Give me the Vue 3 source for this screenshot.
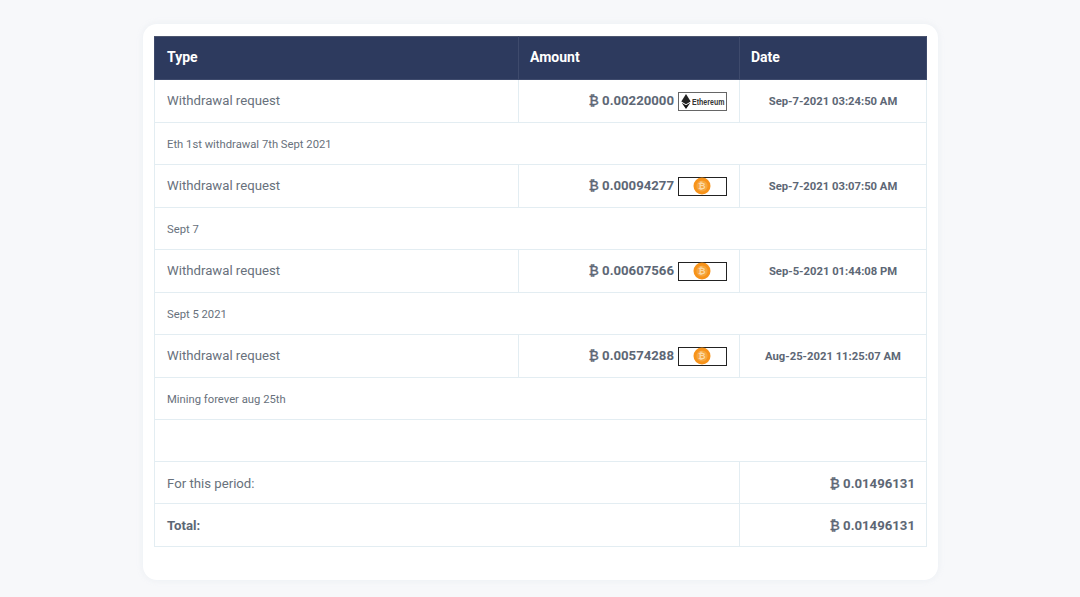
<script setup>
const rows = [
  { amount: '0.00220000', coin: 'eth', date: 'Sep-7-2021 03:24:50 AM', note: 'Eth 1st withdrawal 7th Sept 2021' },
  { amount: '0.00094277', coin: 'btc', date: 'Sep-7-2021 03:07:50 AM', note: 'Sept 7' },
  { amount: '0.00607566', coin: 'btc', date: 'Sep-5-2021 01:44:08 PM', note: 'Sept 5 2021' },
  { amount: '0.00574288', coin: 'btc', date: 'Aug-25-2021 11:25:07 AM', note: 'Mining forever aug 25th' },
]
</script>

<template>
  <div class="page">
    <div class="card">
      <table class="tbl">
        <colgroup>
          <col class="c1" />
          <col class="c2" />
          <col class="c3" />
        </colgroup>
        <thead>
          <tr class="head">
            <th>Type</th>
            <th class="tight">Amount</th>
            <th class="tight">Date</th>
          </tr>
        </thead>
        <tbody>
          <template v-for="r in rows" :key="r.date">
            <tr class="main">
              <td><span class="up">Withdrawal request</span></td>
              <td class="amount">
                <span class="amt up"><span class="sign">₿</span> {{ r.amount }}</span>
                <span class="badge" :class="r.coin">
                  <template v-if="r.coin === 'eth'">
                    <svg class="eth-i" width="10" height="15" viewBox="0 0 10 16">
                      <path d="M5 0 L10 8 L5 11 L0 8 Z" fill="#222" />
                      <path d="M5 12 L9.6 9.2 L5 16 L0.4 9.2 Z" fill="#111" />
                    </svg>
                    <span class="eth-t">Ethereum</span>
                  </template>
                  <svg v-else class="btc-i" width="18" height="18" viewBox="0 0 18 18">
                    <circle cx="9" cy="9" r="8.5" fill="#f7931a" />
                    <circle cx="9" cy="9" r="5.6" fill="#f5a63f" />
                    <text x="9" y="12.2" text-anchor="middle" class="btc-t">₿</text>
                  </svg>
                </span>
              </td>
              <td class="date">{{ r.date }}</td>
            </tr>
            <tr class="note">
              <td colspan="3"><span class="down">{{ r.note }}</span></td>
            </tr>
          </template>
          <tr class="note"><td colspan="3">&nbsp;</td></tr>
          <tr class="sum">
            <td colspan="2"><span class="down">For this period:</span></td>
            <td class="right strong"><span class="down"><span class="sign">₿</span> 0.01496131</span></td>
          </tr>
          <tr class="sum last">
            <td colspan="2" class="strong">Total:</td>
            <td class="right strong"><span class="sign">₿</span> 0.01496131</td>
          </tr>
        </tbody>
      </table>
    </div>
  </div>
</template>

<style>
html, body { margin: 0; background: #f7f8fa; }
</style>

<style scoped>
.page {
  height: 597px;
  box-sizing: border-box;
  padding-top: 24px;
  font-family: Roboto, "Liberation Sans", sans-serif;
  color: #68717c;
}
.card {
  width: 795px;
  height: 556px;
  margin-left: 143px;
  box-sizing: border-box;
  padding: 12px 11px 0;
  background: #fff;
  border-radius: 14px;
  box-shadow: 0 0 6px rgba(220, 226, 235, 0.45);
}
.tbl {
  width: 772px;
  table-layout: fixed;
  border-collapse: collapse;
  font-size: 13.2px;
}
.c1 { width: 364px; }
.c2 { width: 221px; }
.c3 { width: 187px; }
th, td {
  border: 1px solid #e3edf2;
  padding: 0 12px;
  box-sizing: border-box;
  text-align: left;
}
.up { position: relative; top: -1px; }
.down { position: relative; top: 1px; }
.head { height: 43px; }
.head th {
  background: #2d3a5e;
  color: #fff;
  font-size: 14px;
  font-weight: 700;
  border-color: #3e4a6c;
  border-top-color: #4d566f;
  padding-bottom: 2px;
}
.head th.tight { padding-left: 11px; }
.main { height: 43px; }
.note { height: 42px; }
.note td { font-size: 11.25px; color: #68717c; }
.sum { height: 42px; }
.sum.last { height: 43px; }
.amount { text-align: right; }
.amt {
  font-weight: 700;
  vertical-align: middle;
  color: #5d6775;
}
.sign {
  font-family: "DejaVu Sans", sans-serif;
  font-size: 13.5px;
  line-height: 1;
  font-weight: 400;
  -webkit-text-stroke: 0.5px #5d6775;
}
.badge {
  display: inline-flex;
  align-items: center;
  justify-content: center;
  box-sizing: border-box;
  width: 49px;
  height: 19px;
  margin-left: 4px;
  border: 1px solid #222;
  vertical-align: middle;
  background: #fff;
}
.badge.eth { border-color: #666; justify-content: flex-start; padding-left: 2px; }
.btc-i { position: relative; left: -1px; }
.eth-t {
  display: inline-block;
  width: 34px;
  font-family: "Liberation Sans", sans-serif;
  font-size: 9.5px;
  font-weight: 700;
  color: #333;
  transform: scaleX(0.74);
  transform-origin: left center;
  white-space: nowrap;
  margin-left: 1px;
}
.btc-t {
  font-family: "DejaVu Sans", sans-serif;
  font-size: 9px;
  font-weight: 700;
  fill: #fbd9a6;
}
.date {
  text-align: center;
  font-size: 11.25px;
  font-weight: 700;
  color: #5d6775;
  white-space: nowrap;
}
.strong { font-weight: 700; color: #5d6775; }
.right { text-align: right; padding-right: 11px; }
</style>
